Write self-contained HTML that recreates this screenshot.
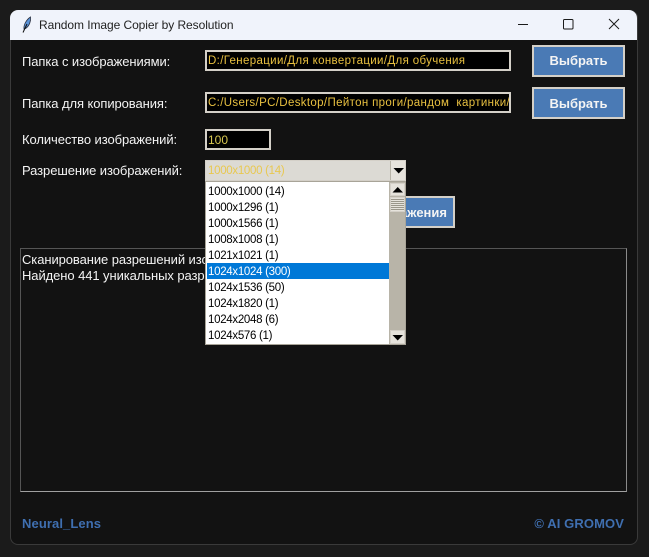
<!DOCTYPE html>
<html><head><meta charset="utf-8">
<style>
html,body{margin:0;padding:0;width:649px;height:557px;overflow:hidden;background:#1b1b1b}
*{box-sizing:border-box}
body{font-family:"Liberation Sans",sans-serif;position:relative}
.a{position:absolute;white-space:nowrap}
#win{left:10px;top:10px;width:628px;height:535px;background:#121212;border:1px solid #3a3a3a;border-top:0;border-radius:8px;overflow:hidden}
#tb{left:10px;top:10px;width:627px;height:30px;background:#f0f3fb;border-radius:8px 8px 0 0;}
.l{left:22px;font-size:13px;line-height:16px;color:#f4f4f4;letter-spacing:-.08px}
.e{background:#000;border:2px solid #d4d0c8;color:#e8c040;font-size:11.5px;line-height:19px;padding-left:1px;overflow:hidden;letter-spacing:.35px}
.b{background:#4a7ab5;border:2px solid #d4d0c8;color:#f4f4f4;font-weight:bold;font-size:13px;text-align:center;line-height:28px}
.i{left:207px;width:180px;height:16px;font-size:11.5px;line-height:18px;color:#000;padding-left:1px;letter-spacing:-.3px}
.sb{background:#e6e3dc;}
</style></head><body>
<div class="a" id="win"></div>
<div class="a" id="tb"></div>
<svg class="a" style="left:20px;top:14px" width="16" height="20" viewBox="0 0 16 20">
<path d="M4 15 C3.500 11 6 6 10.500 3 C11 7 9.500 12 5.500 14.500 Z" fill="#5b93d8" stroke="#2a3040" stroke-width=".8"/>
<path d="M3 18.500 L7 10" stroke="#111" stroke-width="1" fill="none"/>
</svg>
<div class="a" style="left:39px;top:17px;font-size:12px;line-height:16px;color:#222;letter-spacing:-.07px">Random Image Copier by Resolution</div>
<svg class="a" style="left:510px;top:15px" width="120" height="20" viewBox="0 0 120 20" fill="none" stroke="#1a1a1a" stroke-width="1">
<path d="M8 9.500 H18"/>
<rect x="53.500" y="4.500" width="9.500" height="9.500" rx="1"/>
<path d="M99 4 L109 14 M109 4 L99 14"/>
</svg>

<div class="a l" style="top:54px">Папка с изображениями:</div>
<div class="a l" style="top:96px">Папка для копирования:</div>
<div class="a l" style="top:132px">Количество изображений:</div>
<div class="a l" style="top:163px">Разрешение изображений:</div>

<div class="a e" style="left:205px;top:50px;width:306px;height:21px">D:/Генерации/Для конвертации/Для обучения</div>
<div class="a e" style="left:205px;top:92px;width:306px;height:21px">C:/Users/PC/Desktop/Пейтон проги/рандом&nbsp; картинки/</div>
<div class="a e" style="left:205px;top:129px;width:66px;height:21px;letter-spacing:0;font-size:12px;color:#d8c850">100</div>

<div class="a b" style="left:532px;top:45px;width:93px;height:32px">Выбрать</div>
<div class="a b" style="left:532px;top:87px;width:93px;height:32px;line-height:29px">Выбрать</div>
<div class="a b" style="left:210px;top:196px;width:245px;height:32px;text-align:right;padding-right:6px;line-height:29px">Копировать изображения</div>

<div class="a" style="left:20px;top:248px;width:607px;height:244px;border:1px solid;border-color:#555 #8a8a8a #a0a0a0 #555;background:#121212"></div>
<div class="a l" style="top:252px;left:22px;line-height:16px">Сканирование разрешений изображений...<br>Найдено 441 уникальных разрешений</div>

<div class="a" style="left:205px;top:160px;width:201px;height:21px;background:#dcdad4;border:1px solid #d4d0c8;color:#e8c850;font-size:11.5px;line-height:21px;padding-left:2px;letter-spacing:-.3px">1000x1000 (14)</div>
<div class="a sb" style="left:390px;top:161px;width:15px;height:19px;border-left:1px solid #b8b4a8"></div>
<svg class="a" style="left:392px;top:167px" width="13" height="8"><path d="M1.500 1 H12 L6.700 6.500 Z" fill="#000"/></svg>

<div class="a" style="left:205px;top:181px;width:201px;height:164px;background:#fff;border:1px solid #a8a498"></div>
<div class="a" style="left:389px;top:182px;width:16px;height:162px;background:#b8b4a8"></div>
<div class="a sb" style="left:390px;top:183px;width:15px;height:13px;border:1px solid #d4d0c8"></div>
<svg class="a" style="left:391px;top:186px" width="13" height="8"><path d="M1.500 6.500 H12 L6.700 1 Z" fill="#000"/></svg>
<div class="a" style="left:390px;top:197px;width:15px;height:15px;background:repeating-linear-gradient(#e6e3dc 0,#e6e3dc 1px,#9a968a 1px,#9a968a 2px);border:1px solid #d4d0c8"></div>
<div class="a sb" style="left:390px;top:330px;width:15px;height:14px;border:1px solid #d4d0c8"></div>
<svg class="a" style="left:391px;top:334px" width="13" height="8"><path d="M1.500 1 H12 L6.700 6.500 Z" fill="#000"/></svg>

<div class="a" style="left:207px;top:263px;width:182px;height:16px;background:#0078d7"></div>
<div class="a i" style="top:183px">1000x1000 (14)</div>
<div class="a i" style="top:199px">1000x1296 (1)</div>
<div class="a i" style="top:215px">1000x1566 (1)</div>
<div class="a i" style="top:231px">1008x1008 (1)</div>
<div class="a i" style="top:247px">1021x1021 (1)</div>
<div class="a i" style="top:263px;color:#fff">1024x1024 (300)</div>
<div class="a i" style="top:279px">1024x1536 (50)</div>
<div class="a i" style="top:295px">1024x1820 (1)</div>
<div class="a i" style="top:311px">1024x2048 (6)</div>
<div class="a i" style="top:327px">1024x576 (1)</div>

<div class="a" style="left:22px;top:516px;font-size:13px;font-weight:bold;line-height:16px;color:#3f6fb0;letter-spacing:.1px">Neural_Lens</div>
<div class="a" style="right:25px;top:516px;font-size:13px;font-weight:bold;line-height:16px;color:#3f6fb0;letter-spacing:.1px">© AI GROMOV</div>
</body></html>
